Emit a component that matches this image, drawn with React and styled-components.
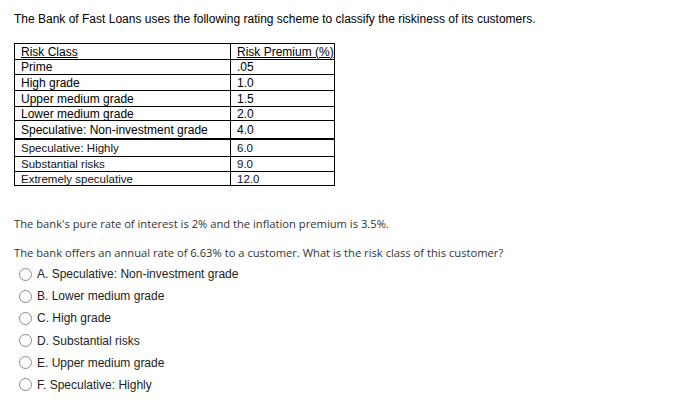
import React from 'react';
import styled, { createGlobalStyle } from 'styled-components';

const GlobalStyle = createGlobalStyle`
  html, body {
    margin: 0;
    padding: 0;
    background: #fff;
  }
`;

const Page = styled.div`
  width: 682px;
  height: 419px;
  padding: 12px 14px 0;
  box-sizing: border-box;
  font-family: 'Liberation Sans', Arial, sans-serif;
  color: #000;
`;

const Intro = styled.p`
  margin: 0;
  font-size: 12px;
  line-height: 14px;
`;

const RiskTable = styled.table`
  margin-top: 17px;
  border-collapse: collapse;
  table-layout: fixed;
  width: 320px;
  font-family: 'Liberation Sans', Arial, sans-serif;
`;

const Cell = styled.td`
  border: 1px solid #000;
  border-bottom-width: ${(p) => (p.$thick ? '2px' : '1px')};
  padding: 0 0 0 6px;
  height: ${(p) => p.$h}px;
  font-size: ${(p) => (p.$small ? '11.5px' : '12px')};
  line-height: 12px;
  white-space: nowrap;
  vertical-align: middle;
  text-decoration: ${(p) => (p.$head ? 'underline' : 'none')};
  color: ${(p) => (p.$small ? '#111' : '#000')};
`;

const Body = styled.p`
  margin: ${(p) => p.$mt}px 0 0;
  font-family: 'Open Sans', sans-serif;
  font-size: 11.2px;
  line-height: 16px;
  color: #333;
`;

const Options = styled.div`
  margin-top: 5px;
  display: flex;
  flex-direction: column;
  gap: 6.2px;
`;

const Option = styled.label`
  display: flex;
  align-items: center;
  height: 16px;
  padding-left: 5px;
  font-size: 12px;
  color: #222;
`;

const Radio = styled.span`
  width: 11px;
  height: 11px;
  border: 1px solid #8a8a8a;
  border-radius: 50%;
  margin-right: 5px;
  flex-shrink: 0;
`;

const rows = [
  ['Risk Class', 'Risk Premium (%)', 15, false, true],
  ['Prime', '.05', 14],
  ['High grade', '1.0', 15],
  ['Upper medium grade', '1.5', 15],
  ['Lower medium grade', '2.0', 13],
  ['Speculative: Non-investment grade', '4.0', 17, false, false, true],
  ['Speculative: Highly', '6.0', 16, true],
  ['Substantial risks', '9.0', 14, true],
  ['Extremely speculative', '12.0', 13, true],
];

const answers = [
  'A. Speculative: Non-investment grade',
  'B. Lower medium grade',
  'C. High grade',
  'D. Substantial risks',
  'E. Upper medium grade',
  'F. Speculative: Highly',
];

export default function App() {
  return (
    <Page>
      <GlobalStyle />
      <Intro>
        The Bank of Fast Loans uses the following rating scheme to classify the riskiness of its customers.
      </Intro>
      <RiskTable>
        <colgroup>
          <col style={{ width: 216 }} />
          <col style={{ width: 104 }} />
        </colgroup>
        <tbody>
          {rows.map(([cls, prem, h, small, head, thick]) => (
            <tr key={cls}>
              <Cell $h={h} $small={small} $head={head} $thick={thick}>{cls}</Cell>
              <Cell $h={h} $small={small} $head={head} $thick={thick}>{prem}</Cell>
            </tr>
          ))}
        </tbody>
      </RiskTable>
      <Body $mt={30}>The bank's pure rate of interest is 2% and the inflation premium is 3.5%.</Body>
      <Body $mt={13}>
        The bank offers an annual rate of 6.63% to a customer. What is the risk class of this customer?
      </Body>
      <Options>
        {answers.map((a) => (
          <Option key={a}>
            <Radio />
            {a}
          </Option>
        ))}
      </Options>
    </Page>
  );
}
